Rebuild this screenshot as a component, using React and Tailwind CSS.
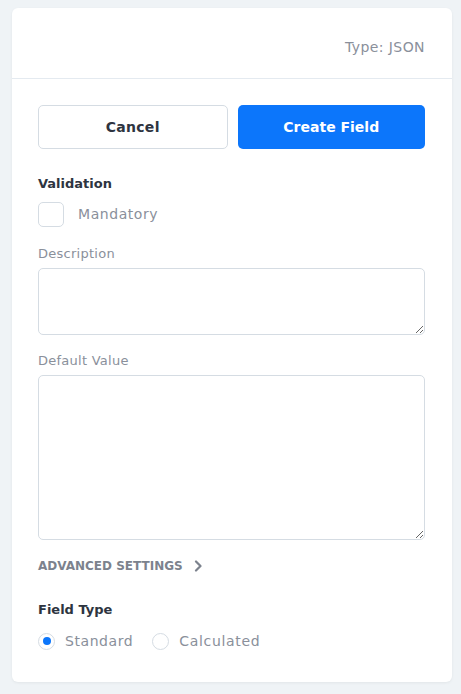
import { useState } from 'react';

const font = { fontFamily: '"DejaVu Sans", "Noto Sans", sans-serif' };

export default function App() {
  const [mandatory, setMandatory] = useState(false);
  const [fieldType, setFieldType] = useState('standard');

  return (
    <div className="min-h-[694px] bg-[#eff3f6] pl-3 pr-[9px] pt-2 pb-3" style={font}>
      <div className="bg-white rounded-md shadow-[0_1px_3px_rgba(0,0,0,0.06)]">
        {/* header */}
        <div className="h-[71px] border-b border-[#e4eaf0] flex items-center justify-end pr-[27px] pt-[8px]">
          <span className="text-[14px] tracking-[0.03em] text-[#8a909b]">Type: JSON</span>
        </div>

        <div className="pl-[26px] pr-[27px] pt-[26px] pb-[31px]">
          <div className="flex gap-[10px]">
            <button className="flex-1 h-[44px] rounded-[5px] border border-[#d5dce3] bg-white text-[14px] font-bold tracking-[0.02em] text-[#2e3440]">
              Cancel
            </button>
            <button className="flex-1 h-[44px] rounded-[5px] bg-[#0c76fb] text-[14px] font-bold text-white">
              Create Field
            </button>
          </div>

          <div className="mt-[27px] text-[13px] leading-[16px] font-bold text-[#2d3440]">Validation</div>
          <label className="mt-[10px] flex items-center gap-[14px] cursor-pointer">
            <span
              onClick={() => setMandatory(!mandatory)}
              className="w-[26px] h-[25px] rounded-[5px] border border-[#d5dce3] bg-white"
            />
            <span className="text-[14px] tracking-[0.04em] text-[#8a909b]">Mandatory</span>
          </label>

          <div className="mt-[19px] text-[13px] leading-[16px] tracking-[0.02em] text-[#8a909b]">Description</div>
          <textarea className="mt-[6px] block w-full h-[67px] rounded-[5px] border border-[#d5dce3] outline-none px-3 py-2 text-[14px]" />

          <div className="mt-[18px] text-[13px] leading-[16px] tracking-[0.02em] text-[#8a909b]">Default Value</div>
          <textarea className="mt-[6px] block w-full h-[165px] rounded-[5px] border border-[#d5dce3] outline-none px-3 py-2 text-[14px]" />

          <button className="mt-[18px] flex items-center gap-[11px] text-[12px] leading-[16px] font-bold text-[#7c828d]">
            ADVANCED SETTINGS
            <svg width="9" height="12" viewBox="0 0 9 12" fill="none">
              <path d="M2 1.5L6.5 6L2 10.5" stroke="#7c828d" strokeWidth="2.2" strokeLinecap="round" strokeLinejoin="round" />
            </svg>
          </button>

          <div className="mt-[28px] text-[13px] leading-[16px] font-bold text-[#2d3440]">Field Type</div>
          <div className="mt-[13px] flex items-center gap-[19px]">
            <label className="flex items-center gap-[10px] cursor-pointer" onClick={() => setFieldType('standard')}>
              <span className="w-[17px] h-[17px] rounded-full border border-[#d5dce3] flex items-center justify-center">
                {fieldType === 'standard' && <span className="w-[8px] h-[8px] rounded-full bg-[#0c76fb]" />}
              </span>
              <span className="text-[14px] leading-[20px] tracking-[0.04em] text-[#8a909b]">Standard</span>
            </label>
            <label className="flex items-center gap-[10px] cursor-pointer" onClick={() => setFieldType('calculated')}>
              <span className="w-[17px] h-[17px] rounded-full border border-[#d5dce3] flex items-center justify-center">
                {fieldType === 'calculated' && <span className="w-[8px] h-[8px] rounded-full bg-[#0c76fb]" />}
              </span>
              <span className="text-[14px] leading-[20px] tracking-[0.05em] text-[#8a909b]">Calculated</span>
            </label>
          </div>
        </div>
      </div>
    </div>
  );
}
